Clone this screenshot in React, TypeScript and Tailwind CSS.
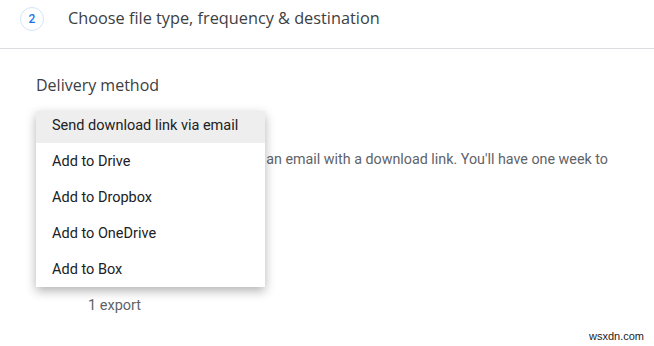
export default function App() {
  const options = [
    'Send download link via email',
    'Add to Drive',
    'Add to Dropbox',
    'Add to OneDrive',
    'Add to Box',
  ];

  return (
    <div className="relative w-[654px] h-[346px] overflow-hidden bg-white font-['Roboto',sans-serif]">
      {/* step header */}
      <div className="flex items-start h-[49px] pt-[7px] pl-[20px] border-b border-[#dadce0]">
        <div className="flex items-center justify-center w-[24px] h-[24px] rounded-full border border-[#d2e3fc] text-[12px] text-[#1a73e8] font-medium">
          2
        </div>
        <div className="ml-[24px] text-[16.3px] leading-[22px] text-[#3c4043] font-['Open_Sans',sans-serif]">
          Choose file type, frequency &amp; destination
        </div>
      </div>

      <div className="pl-[36px]">
        <div className="pt-[26px] text-[16px] text-[#3c4043] font-['Open_Sans',sans-serif] leading-[20px]">
          Delivery method
        </div>
        <div className="relative mt-[12px]">
          <div className="h-[36px]" />
          <p className="w-[590px] ml-[6px] mt-[6px] text-[14.3px] leading-[20px] text-[#5f6368]">
            When your files are ready, you'll get an email with a download link. You'll have one week to
            download your files.
          </p>
          <div className="mt-[107px] pl-[52px] text-[14.5px] leading-[20px] text-[#5f6368]">1 export</div>

          <div className="absolute left-0 top-[4px] w-[229px] bg-white shadow-[0_4px_10px_rgba(0,0,0,0.3)]">
            {options.map((o, i) => (
              <div
                key={o}
                className={
                  i === 0
                    ? 'h-[32px] leading-[30px] pl-[16px] text-[14.5px] text-[#202124] bg-[#eeeeee]'
                    : 'h-[36px] pt-[2px] leading-[34px] pl-[16px] text-[14.5px] text-[#202124]'
                }
              >
                {o}
              </div>
            ))}
          </div>
        </div>
      </div>

      <div className="absolute right-[10px] bottom-[2px] text-[11px] text-[#222] font-['Liberation_Sans',sans-serif]">
        wsxdn.com
      </div>
    </div>
  );
}
